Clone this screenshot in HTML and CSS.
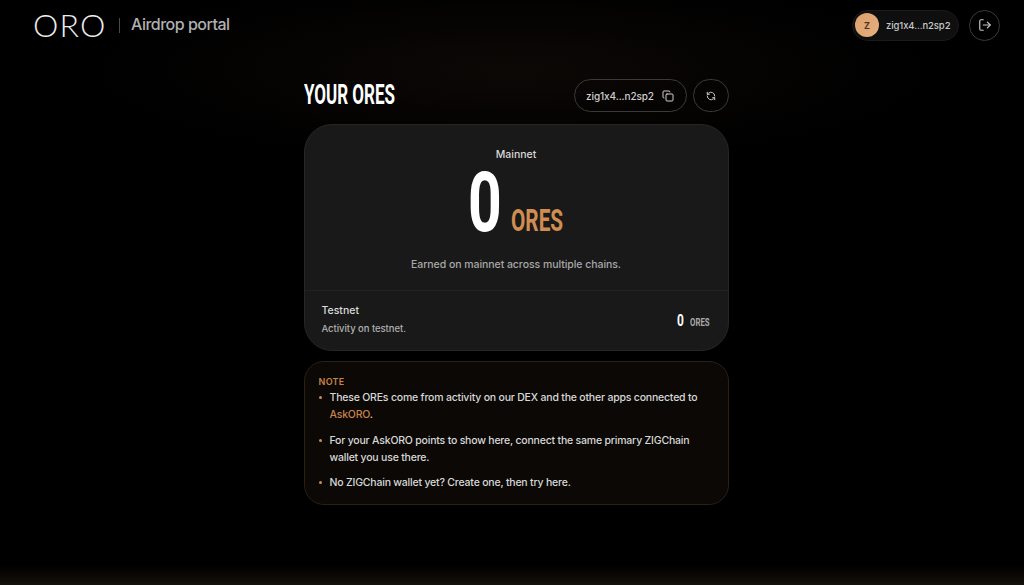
FILE: index.html
```html
<!DOCTYPE html>
<html lang="en">
<head>
    <meta charset="UTF-8">
    <meta name="viewport" content="width=device-width, initial-scale=1.0">
    <title>ORO Airdrop portal</title>
    <link rel="stylesheet" href="styles.css">
</head>
<body>
    <header class="topbar">
        <div class="brand">
            <span class="logo">ORO</span>
            <span class="brand-sep"></span>
            <span class="brand-name">Airdrop portal</span>
        </div>
        <div class="account">
            <div class="wallet-chip">
                <span class="avatar">Z</span>
                <span>zig1x4...n2sp2</span>
            </div>
            <button type="button" class="round-btn logout">
                <svg width="14" height="14" viewBox="0 0 24 24" fill="none" stroke="currentColor" stroke-width="2" stroke-linecap="round" stroke-linejoin="round"><path d="M9 21H5a2 2 0 0 1-2-2V5a2 2 0 0 1 2-2h4"/><path d="M16 17l5-5-5-5"/><path d="M21 12H9"/></svg>
            </button>
        </div>
    </header>

    <main class="content">
        <div class="title-row">
            <h1 class="narrow"><span class="title-text">YOUR ORES</span></h1>
            <div class="title-actions">
                <button type="button" class="address-btn">
                    <span>zig1x4...n2sp2</span>
                    <svg width="12" height="12" viewBox="0 0 24 24" fill="none" stroke="currentColor" stroke-width="2" stroke-linecap="round" stroke-linejoin="round"><rect x="8" y="8" width="14" height="14" rx="2"/><path d="M4 16a2 2 0 0 1-2-2V4a2 2 0 0 1 2-2h10a2 2 0 0 1 2 2"/></svg>
                </button>
                <button type="button" class="round-btn refresh">
                    <svg width="10" height="10" viewBox="0 0 24 24" fill="none" stroke="currentColor" stroke-width="2.4" stroke-linecap="round" stroke-linejoin="round"><path d="M21 12a9 9 0 0 0-15-6.7L3 8"/><path d="M3 3v5h5"/><path d="M3 12a9 9 0 0 0 15 6.7l3-2.7"/><path d="M16 16h5v5"/></svg>
                </button>
            </div>
        </div>

        <section class="ores-card">
            <div class="mainnet">
                <div class="mainnet-label">Mainnet</div>
                <div class="mainnet-total narrow">
                    <span class="big-zero">0</span>
                    <span class="big-unit">ORES</span>
                </div>
                <p class="mainnet-desc">Earned on mainnet across multiple chains.</p>
            </div>
            <div class="testnet">
                <div>
                    <div class="testnet-label">Testnet</div>
                    <div class="testnet-desc">Activity on testnet.</div>
                </div>
                <div class="testnet-total narrow">
                    <span class="small-zero">0</span>
                    <span class="small-unit">ORES</span>
                </div>
            </div>
        </section>

        <section class="note">
            <div class="note-title">NOTE</div>
            <ul>
                <li>These OREs come from activity on our DEX and the other apps connected to <a href="#">AskORO</a>.</li>
                <li>For your AskORO points to show here, connect the same primary ZIGChain wallet you use there.</li>
                <li>No ZIGChain wallet yet? Create one, then try here.</li>
            </ul>
        </section>
    </main>
</body>
</html>
```

FILE: styles.css
```css
*{
    margin: 0;
    padding: 0;
    box-sizing: border-box;
}
html, body{
    height: 100%;
}
body{
    background-color: #000;
    background-image:
        radial-gradient(ellipse 420px 90px at 50% 70px, #0c0806 0, rgba(12, 8, 6, 0) 100%),
        linear-gradient(to bottom, #000 565px, #14100b 585px);
    color: #fff;
    font-family: "Inter", "Liberation Sans", sans-serif;
    overflow: hidden;
}
.narrow{
    font-family: "Roboto", sans-serif;
    font-weight: 700;
}
.narrow span{
    display: inline-block;
    transform-origin: left bottom;
}
button{
    font-family: inherit;
    background: none;
    cursor: pointer;
}

.topbar{
    height: 50px;
    padding: 0 24px 0 33px;
    display: flex;
    align-items: center;
    justify-content: space-between;
}
.brand{
    display: flex;
    align-items: center;
}
.logo{
    font-family: "Lato", sans-serif;
    font-weight: 300;
    font-size: 32px;
    letter-spacing: 1.2px;
    line-height: 50px;
    width: 72px;
    color: #ececec;
}
.brand-sep{
    width: 1px;
    height: 15px;
    background-color: #4a4a4a;
    margin: 0 11px 0 14px;
}
.brand-name{
    font-size: 16px;
    font-weight: 500;
    letter-spacing: -0.5px;
    color: #b0b0b0;
    margin-top: -2px;
}
.account{
    display: flex;
    align-items: center;
    gap: 10px;
}
.wallet-chip{
    width: 107px;
    height: 31px;
    border-radius: 16px;
    background-color: #0f0f0f;
    border: 1px solid #1a1a1a;
    display: flex;
    align-items: center;
    gap: 7px;
    padding-left: 2px;
    font-size: 9.5px;
    font-weight: 500;
    letter-spacing: -0.1px;
    color: #c8c8c8;
    white-space: nowrap;
}
.avatar{
    width: 24px;
    height: 24px;
    border-radius: 50%;
    background: linear-gradient(135deg, #dca06c, #e6b080);
    color: #4a3320;
    font-size: 9px;
    font-weight: 700;
    display: flex;
    align-items: center;
    justify-content: center;
}
.round-btn{
    display: flex;
    align-items: center;
    justify-content: center;
    border-radius: 50%;
    border: 1px solid #3a3a3a;
    color: #c8c8c8;
}
.logout{
    width: 31px;
    height: 31px;
}

.content{
    width: 425px;
    margin-left: 303.5px;
    padding-top: 29px;
}
.title-row{
    display: flex;
    align-items: center;
    justify-content: space-between;
    height: 33px;
    margin-bottom: 11.5px;
}
h1{
    font-size: 27px;
    line-height: 32px;
    margin-top: -1px;
    color: #fff;
}
.title-text{
    width: 92px;
    white-space: nowrap;
    transform: scaleX(0.63);
}
.title-actions{
    display: flex;
    gap: 6px;
}
.address-btn{
    width: 113px;
    height: 33px;
    border-radius: 17px;
    border: 1px solid #3a3a3a;
    color: #cfcfcf;
    font-size: 10px;
    font-weight: 500;
    letter-spacing: -0.1px;
    display: flex;
    align-items: center;
    justify-content: center;
    gap: 8px;
    white-space: nowrap;
}
.refresh{
    width: 36px;
    height: 33px;
    border-radius: 17px;
}

.ores-card{
    height: 227px;
    border-radius: 28px;
    background-color: #191919;
    border: 1px solid #262626;
    overflow: hidden;
}
.mainnet{
    height: 166px;
    padding-top: 23px;
    text-align: center;
    border-bottom: 1px solid #222;
}
.mainnet-label{
    font-size: 10.5px;
    font-weight: 500;
    line-height: 13px;
    color: #d8d8d8;
}
.mainnet-total{
    display: flex;
    align-items: baseline;
    padding-left: 163px;
    height: 68px;
    line-height: 68px;
    margin-top: 8px;
}
.big-zero{
    font-size: 84px;
    width: 43px;
    transform: scaleX(0.7);
}
.big-unit{
    font-size: 31px;
    width: 53px;
    white-space: nowrap;
    color: #d08d52;
    transform: scaleX(0.67);
}
.mainnet-desc{
    margin-top: 21px;
    font-size: 10.5px;
    font-weight: 500;
    letter-spacing: -0.05px;
    color: #a8a8a8;
}
.testnet{
    height: 59px;
    padding: 0 19px 0 17px;
    display: flex;
    align-items: center;
    justify-content: space-between;
}
.testnet-label{
    font-size: 10.5px;
    font-weight: 500;
    line-height: 13px;
    color: #dadada;
    margin-bottom: 6px;
    margin-top: -2px;
}
.testnet-desc{
    font-size: 9.5px;
    font-weight: 500;
    letter-spacing: -0.05px;
    line-height: 12px;
    color: #b0b0b0;
}
.testnet-total{
    display: flex;
    align-items: baseline;
    gap: 6px;
}
.small-zero{
    font-size: 17px;
    width: 7px;
    transform: scaleX(0.7);
}
.small-unit{
    font-size: 11.5px;
    width: 19px;
    white-space: nowrap;
    color: #a8a8a8;
    transform: scaleX(0.68);
}

.note{
    margin-top: 10.5px;
    height: 144px;
    padding: 14px 14px 0;
    border-radius: 20px;
    background-color: #0b0805;
    border: 1px solid #2a2015;
}
.note-title{
    font-size: 9px;
    font-weight: 600;
    letter-spacing: 0.3px;
    line-height: 11px;
    color: #c7834a;
    margin-bottom: 2px;
}
.note ul{
    list-style: none;
}
.note li{
    position: relative;
    padding-left: 11px;
    font-size: 10.5px;
    font-weight: 500;
    letter-spacing: -0.2px;
    line-height: 17px;
    color: #d8d8d8;
    margin-bottom: 8.5px;
}
.note li::before{
    content: "";
    position: absolute;
    left: 0;
    top: 7px;
    width: 3px;
    height: 3px;
    border-radius: 50%;
    background-color: #d08d52;
}
.note a{
    color: #c7834a;
    text-decoration: none;
}
```
